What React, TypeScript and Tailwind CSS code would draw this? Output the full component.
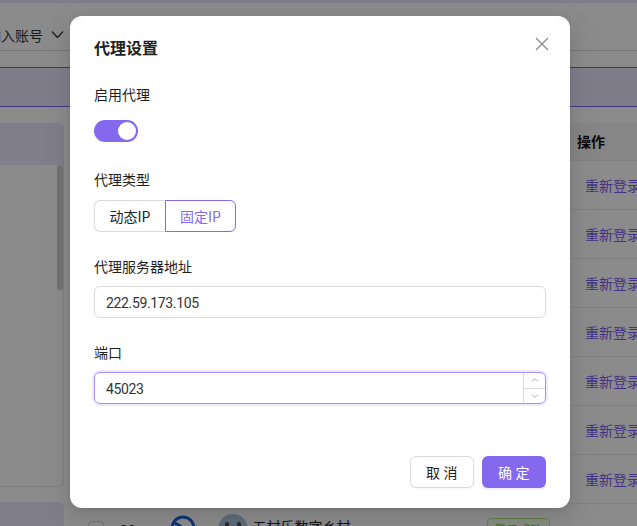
import React from "react";

const FONT = "font-['Noto_Sans_CJK_SC','Liberation_Sans',sans-serif]";
const DIGITS = "font-['Roboto','Noto_Sans_CJK_SC',sans-serif] tracking-[-0.35px]";

function Row({ h = "h-[49px]" }: { h?: string }) {
  return (
    <div className={`${h} shrink-0 border-b border-[#e8e8e8] pl-[509px] flex items-center whitespace-nowrap text-sm text-[#7c5ef0]`}>
      重新登录
    </div>
  );
}

function Label({ children }: { children: React.ReactNode }) {
  return <div className="h-[22px] leading-[20px] text-sm text-[#1f1f1f]">{children}</div>;
}

export default function App() {
  return (
    <div className={`relative w-[637px] h-[526px] overflow-hidden bg-[#fdfdfd] ${FONT}`}>
      {/* page behind the dialog */}
      <div className="h-[3px] bg-[#e8e6f4]" />
      <div className="h-[48px] border-b border-[#d9d9d9] bg-[#fdfdfd] flex items-center">
        <span className="ml-[-13px] mt-[16px] text-sm text-[#333]">输入账号</span>
        <svg className="ml-[8px] mt-[16px]" width="13" height="13" viewBox="0 0 13 13" fill="none" stroke="#333" strokeWidth="1.2">
          <path d="M1 3.5 6.5 9.5 12 3.5" />
        </svg>
      </div>
      <div className="mt-[16px] h-[40px] border-y border-[#7b61e8] bg-[#e7e3fb]" />
      <div className="mt-[16px] flex items-start">
        <div className="w-[64px] h-[364px] shrink-0 rounded-r-md border border-l-0 border-[#e5e5e5] bg-[#fdfdfd] overflow-hidden">
          <div className="h-[41px] bg-[#e9e5fb]" />
          <div className="ml-[57px] w-[6px] h-[125px] rounded-full bg-[#cfcfcf]" />
        </div>
        <div className="ml-[12px] flex-1 min-w-0">
          <div className="h-[38px] bg-[#f5f5f5] border-b border-[#e8e8e8] pl-[501px] pb-[2px] flex items-center text-sm font-bold text-[#111]">
            操作
          </div>
          <Row />
          <Row />
          <Row />
          <Row />
          <Row />
          <Row />
          <Row />
        </div>
      </div>
      <div className="absolute left-0 top-[502px] w-[64px] h-[30px] rounded-tr-md bg-[#e9e5fb]" />
      <div className="absolute left-[88px] top-[521px] flex items-start h-[30px] text-sm text-[#222] whitespace-nowrap">
        <span className="w-[16px] h-[16px] rounded border border-[#d0d0d0] bg-white" />
        <span className="ml-[16px] leading-[16px]">20</span>
        <svg className="ml-[34px] -mt-[6px]" width="26" height="26" viewBox="0 0 26 26" fill="none" stroke="#1d5fd1" strokeWidth="3">
          <circle cx="13" cy="13" r="11" />
          <path d="M4 8C9 8 15 18 22 16" />
        </svg>
        <span className="ml-[22px] -mt-[7px] w-[30px] h-[30px] rounded-full bg-[#a9c3dc] flex justify-center gap-[8px] pt-[8px]">
          <span className="w-[4px] h-[8px] rounded-full bg-[#5a4a48]" />
          <span className="w-[4px] h-[8px] rounded-full bg-[#5a4a48]" />
        </span>
        <span className="ml-[5px] -mt-[6px] leading-[22px]">五村乐数字乡村</span>
      </div>
      <div className="absolute left-[487px] top-[518px] w-[63px] h-[24px] rounded border border-[#b7eb8f] bg-[#f6ffed] text-center text-xs leading-[22px] text-[#52c41a]">
        登录成功
      </div>

      {/* mask + dialog */}
      <div className="absolute inset-0 bg-black/45 pt-[16px]">
        <div className="ml-[70px] w-[500px] h-[492px] rounded-xl bg-white shadow-[0_6px_16px_rgba(0,0,0,0.08),0_3px_6px_-4px_rgba(0,0,0,0.12),0_9px_28px_8px_rgba(0,0,0,0.05)] px-[24px] pt-[20px] flex flex-col">
          <div className="flex items-start justify-between">
            <div className="h-[24px] leading-[22px] text-base font-bold text-[#222]">代理设置</div>
            <svg className="mt-[1px] mr-[-3px]" width="14" height="14" viewBox="0 0 14 14" fill="none" stroke="#8c8c8c" strokeWidth="1.3">
              <path d="M1 1 13 13M13 1 1 13" />
            </svg>
          </div>

          <div className="mt-[24px]"><Label>启用代理</Label></div>
          <div className="mt-[14px] w-[44px] h-[22px] rounded-full bg-[#8468ee] flex justify-end items-center pr-[2px]">
            <span className="w-[18px] h-[18px] rounded-full bg-white" />
          </div>

          <div className="mt-[27px]"><Label>代理类型</Label></div>
          <div className="mt-[9px] flex w-[142px] h-[32px] text-sm leading-[30px] text-center">
            <div className="w-[71px] rounded-l-md border border-r-0 border-[#d9d9d9] text-[#222]">动态IP</div>
            <div className="w-[71px] rounded-r-md border border-[#8468ee] text-[#8468ee]">固定IP</div>
          </div>

          <div className="mt-[24px]"><Label>代理服务器地址</Label></div>
          <div className={`mt-[8px] h-[32px] rounded-md border border-[#d9d9d9] px-[11px] text-sm leading-[32px] text-[#333] ${DIGITS}`}>
            222.59.173.105
          </div>

          <div className="mt-[24px]"><Label>端口</Label></div>
          <div className="mt-[8px] h-[32px] rounded-md border border-[#a48ffa] shadow-[0_0_0_2px_#efeaff] flex text-sm leading-[32px] text-[#333]">
            <span className={`flex-1 px-[11px] ${DIGITS}`}>45023</span>
            <div className="w-[22px] border-l border-[#d9d9d9] flex flex-col">
              <div className="flex-1 border-b border-[#d9d9d9] flex items-center justify-center">
                <svg width="8" height="8" viewBox="0 0 8 8" fill="none" stroke="#a6a6a6" strokeWidth="0.9">
                  <path d="M1 5.5 4 2.5 7 5.5" />
                </svg>
              </div>
              <div className="flex-1 flex items-center justify-center">
                <svg width="8" height="8" viewBox="0 0 8 8" fill="none" stroke="#a6a6a6" strokeWidth="0.9">
                  <path d="M1 2.5 4 5.5 7 2.5" />
                </svg>
              </div>
            </div>
          </div>

          <div className="mt-[52px] flex justify-end gap-[8px]">
            <button className="w-[64px] h-[32px] rounded-md border border-[#d9d9d9] bg-white pl-[3px] text-sm text-[#222] tracking-[0.25em] shadow-[0_2px_0_rgba(0,0,0,0.02)]">
              取消
            </button>
            <button className="w-[64px] h-[32px] rounded-md bg-[#8468ee] pl-[3px] text-sm text-white tracking-[0.25em] shadow-[0_2px_0_rgba(130,100,240,0.1)]">
              确定
            </button>
          </div>
        </div>
      </div>
    </div>
  );
}
